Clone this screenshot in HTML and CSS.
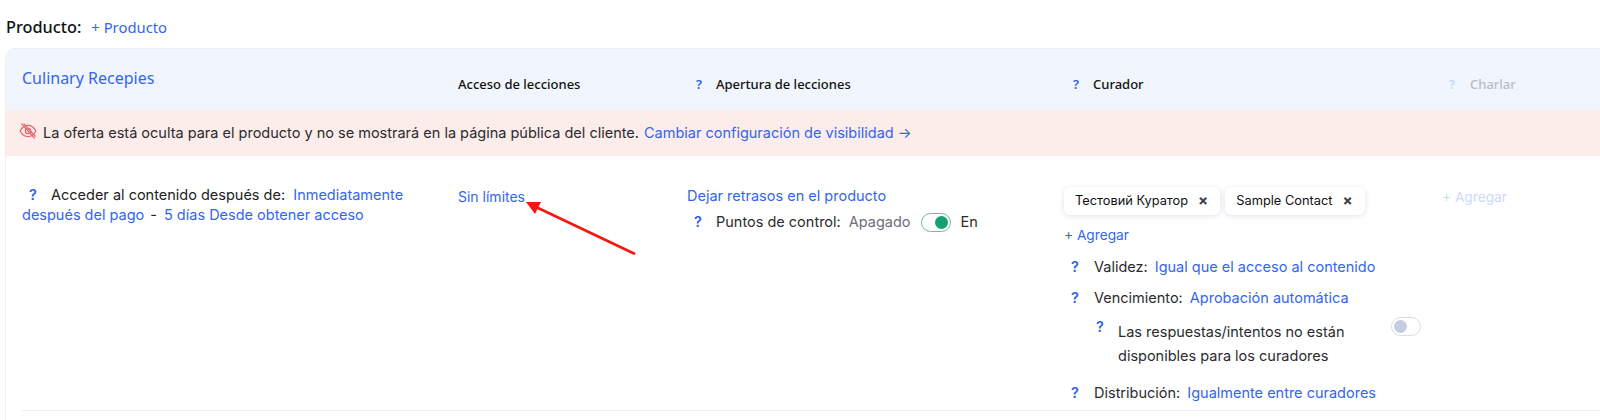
FILE: index.html
```html
<!DOCTYPE html>
<html lang="en">
<head>
    <meta charset="UTF-8">
    <title>Producto</title>
    <link rel="stylesheet" href="styles.css">
</head>
<body>
    <div class="page">
        <div class="title-row">
            <span class="title">Producto:</span>
            <a class="add-product">+ Producto</a>
        </div>

        <div class="card">
            <div class="card-head cols">
                <a class="offer-name">Culinary Recepies</a>
                <div class="head-cell"><b>Acceso de lecciones</b></div>
                <div class="head-cell"><span class="hint">?</span><b>Apertura de lecciones</b></div>
                <div class="head-cell"><span class="hint">?</span><b>Curador</b></div>
                <div class="head-cell muted"><span class="hint">?</span><b>Charlar</b></div>
            </div>

            <div class="notice">
                <svg class="notice-icon" viewBox="0 0 24 24" fill="none" stroke="#e8636a" stroke-width="1.6" stroke-linecap="round" stroke-linejoin="round">
                    <path d="M1.500 12s4-7.500 10.500-7.500S22.500 12 22.500 12s-4 7.500-10.500 7.500S1.500 12 1.500 12z"/>
                    <circle cx="12" cy="12" r="3.500"/>
                    <path d="M3.500 2.500l17 19"/>
                    <path d="M6.500 2.500l15 16.500"/>
                </svg>
                <span>La oferta está oculta para el producto y no se mostrará en la página pública del cliente.</span>
                <a>Cambiar configuración de visibilidad →</a>
            </div>

            <div class="card-body cols">
                <div class="access">
                    <span class="hint">?</span>Acceder al contenido después de: <a>&nbsp;Inmediatamente después del pago</a><span class="dash">-</span><a>5 días Desde obtener acceso</a>
                </div>

                <div class="limits"><a>Sin límites</a></div>

                <div class="opening">
                    <a class="delays">Dejar retrasos en el producto</a>
                    <div class="line">
                        <span class="hint">?</span>
                        <span>Puntos de control:</span>
                        <span class="off-label">Apagado</span>
                        <span class="switch on"><i></i></span>
                        <span>En</span>
                    </div>
                </div>

                <div class="curators">
                    <div class="chips">
                        <span class="chip">Тестовий Куратор <i>×</i></span>
                        <span class="chip">Sample Contact <i>×</i></span>
                    </div>
                    <a class="add-curator">+ Agregar</a>
                    <div class="line line-validity">
                        <span class="hint">?</span><span>Validez:</span><a>Igual que el acceso al contenido</a>
                    </div>
                    <div class="line line-expiry">
                        <span class="hint">?</span><span>Vencimiento:</span><a>Aprobación automática</a>
                    </div>
                    <div class="answers">
                        <span class="hint">?</span>
                        <span class="answers-text">Las respuestas/intentos no están disponibles para los curadores</span>
                        <span class="switch"><i></i></span>
                    </div>
                    <div class="line">
                        <span class="hint">?</span><span>Distribución:</span><a>Igualmente entre curadores</a>
                    </div>
                </div>

                <div class="chat"><a>+ Agregar</a></div>
            </div>
            <div class="card-rule"></div>
        </div>
    </div>

    <!-- annotation drawn over the screenshot -->
    <svg class="arrow" width="130" height="70" viewBox="0 0 130 70">
        <path d="M121 59L22 12" stroke="#f5170f" stroke-width="2.500" fill="none"/>
        <path d="M12 7L27 7L21 19z" fill="#f5170f"/>
    </svg>
</body>
</html>
```

FILE: styles.css
```css
body {
    font-family: 'Inter', sans-serif;
    font-size: 14.5px;
    line-height: 20px;
    margin: 0;
    color: #2b2b2f;
    background: #fff;
    height: 420px;
    overflow: hidden;
    position: relative;
}

a {
    color: #3366f0;
}

.page {
    padding: 16px 0 0 5px;
}

.title-row {
    display: flex;
    align-items: center;
    gap: 10px;
    height: 22px;
    margin-bottom: 10px;
    padding-left: 1px;
}

.title {
    font-family: 'Noto Sans', sans-serif;
    font-size: 16.3px;
    font-weight: 500;
    color: #111;
}

.add-product {
    font-family: 'Noto Sans', sans-serif;
    font-size: 14.8px;
}

.card {
    width: 1640px;
    border: 1px solid #eceef5;
    border-radius: 10px 0 0 0;
    overflow: hidden;
}

.cols {
    display: grid;
    grid-template-columns: 436px 229px 377px 378px 200px;
    padding-left: 16px;
}

.card-head {
    height: 61px;
    background: #f1f5fe;
}

.offer-name {
    font-family: 'Noto Sans', sans-serif;
    font-size: 16px;
    line-height: 22px;
    margin-top: 18px;
}

.head-cell {
    display: flex;
    align-items: center;
    height: 20px;
    margin-top: 25px;
    font-family: 'Noto Sans', sans-serif;
    font-size: 13px;
    color: #111;
}

.head-cell b {
    font-weight: 500;
}

.head-cell .hint {
    margin-left: 2px;
    width: 27px;
}

.head-cell.muted {
    margin-left: -3px;
    color: #b9bcc6;
}

.head-cell.muted .hint {
    margin-left: 3px;
    width: 28px;
    color: #c9d6fb;
}

.hint {
    display: inline-block;
    width: 29px;
    padding-left: 7px;
    box-sizing: border-box;
    font-weight: 600;
    color: #2d5ff0;
    flex-shrink: 0;
}

.notice {
    display: flex;
    align-items: center;
    gap: 6px;
    height: 46px;
    padding-left: 13px;
    background: #fcecea;
}

.notice-icon {
    width: 18px;
    height: 18px;
    margin-top: -4px;
}

.notice a {
    margin-left: -1px;
}

.card-body {
    padding-top: 29px;
    height: 254px;
    box-sizing: border-box;
}

.access {
    width: 395px;
    line-height: 20px;
    color: #222;
}

.dash {
    margin: 0 7px 0 6px;
}

.limits {
    padding-top: 2px;
    font-size: 14px;
}

.line {
    display: flex;
    align-items: center;
    gap: 7px;
}

.line .hint {
    margin-right: -7px;
}

.opening .line {
    margin-top: 6px;
}

.delays {
    display: block;
    margin-top: 1px;
}

.off-label {
    color: #6c6f78;
    margin-left: 1px;
}

.switch {
    display: inline-block;
    width: 30px;
    height: 19px;
    box-sizing: border-box;
    border: 1px solid #d5def0;
    border-radius: 10px;
    padding: 2px;
    margin: 0 3px;
}

.switch i {
    display: block;
    width: 13px;
    height: 13px;
    border-radius: 50%;
    background: #c4cee2;
}

.switch.on {
    border-color: #6dbd9f;
}

.switch.on i {
    background: #14a06f;
    margin-left: 11px;
}

.curators {
    display: flex;
    flex-direction: column;
    align-items: flex-start;
}

.chips {
    display: flex;
    gap: 5px;
    margin-top: 2px;
}

.chip {
    display: flex;
    align-items: center;
    justify-content: space-between;
    gap: 10px;
    height: 28px;
    padding: 0 12px 0 11px;
    border-radius: 6px;
    font-size: 12.8px;
    color: #111;
    background: #fff;
    box-shadow: 0 1px 5px rgba(40, 60, 110, 0.16);
}

.chip i {
    font-style: normal;
    font-weight: 700;
    font-size: 15px;
    color: #3a4150;
}

.add-curator {
    margin-top: 10px;
    font-size: 13.7px;
}

.curators .line {
    padding-left: 0;
}

.curators .line .hint {
    width: 30px;
}

.line-validity {
    margin-top: 12px;
}

.line-expiry {
    margin-top: 11px;
}

.answers {
    display: flex;
    align-items: flex-start;
    width: 358px;
    padding-left: 25px;
    box-sizing: border-box;
    margin-top: 12px;
    margin-bottom: 15px;
}

.answers .hint {
    width: 29px;
    margin-top: -3px;
}

.answers-text {
    width: 268px;
    line-height: 24px;
}

.answers .switch {
    margin: -3px 0 0 5px;
}

.chat {
    padding-top: 2px;
    font-size: 13.7px;
}

.chat a {
    color: #ccd9fb;
}

.card-rule {
    height: 1px;
    margin: 0 0 20px 16px;
    background: #eef0f4;
}

.arrow {
    position: absolute;
    left: 514px;
    top: 195px;
}
```
